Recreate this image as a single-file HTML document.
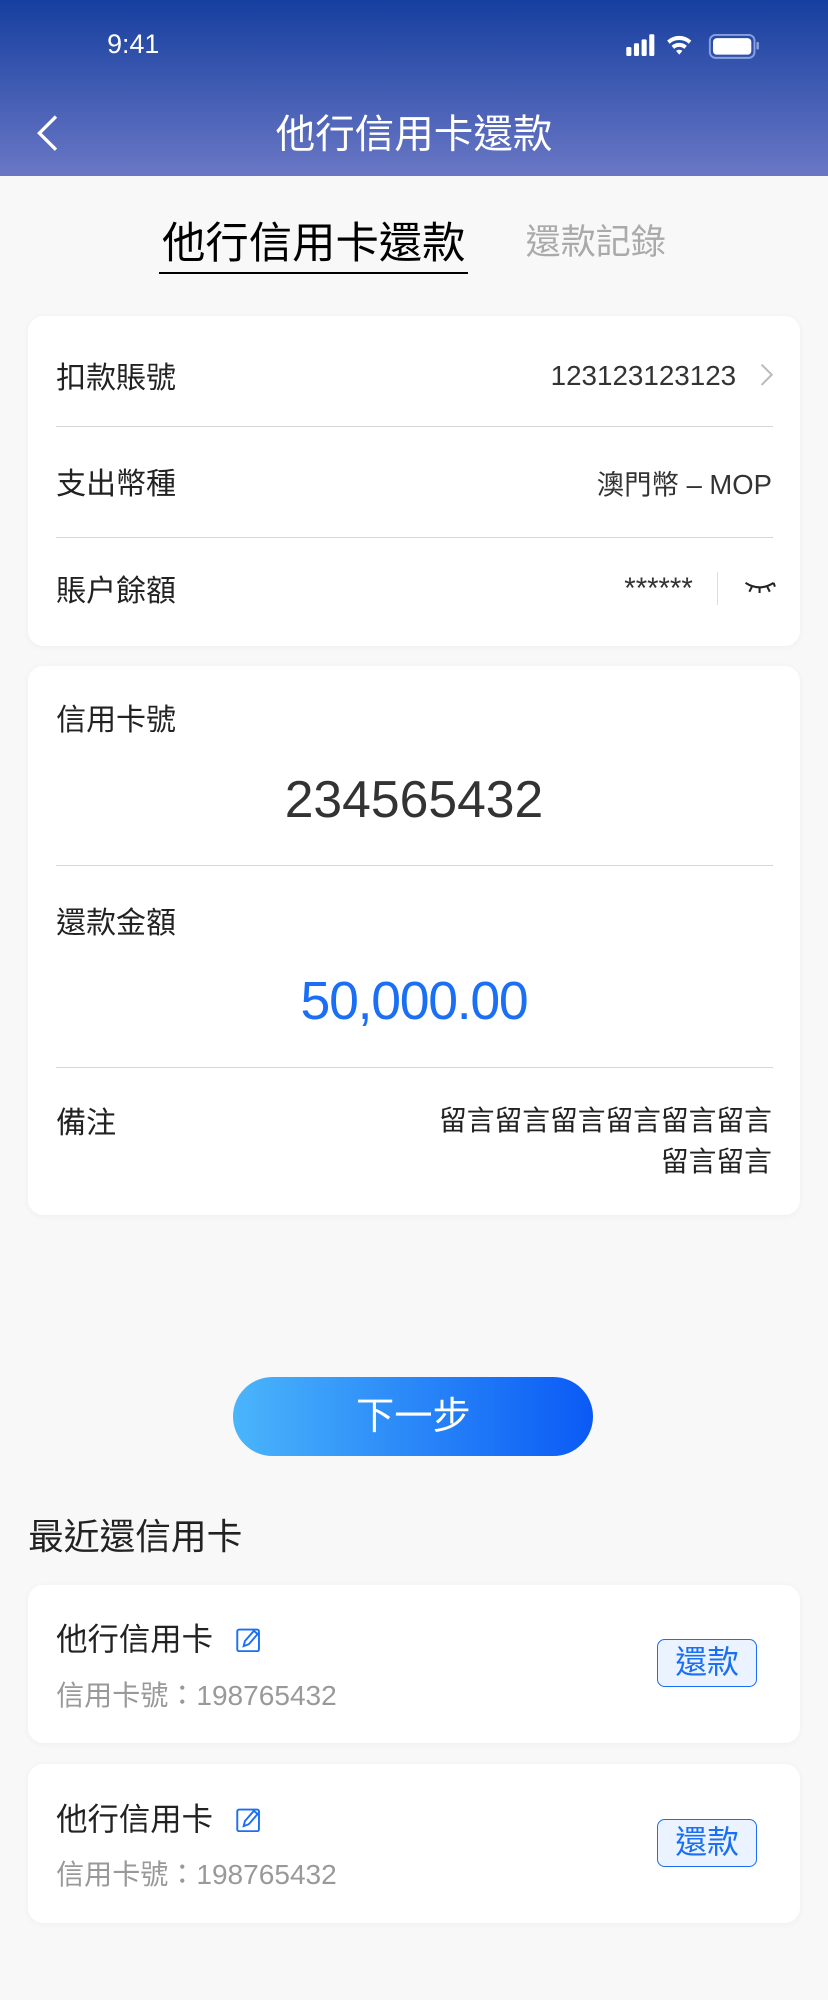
<!DOCTYPE html>
<html><head><meta charset="utf-8"><style>
html,body{margin:0;padding:0;background:#f8f8f8;}
body{width:828px;height:2000px;overflow:hidden;}
#w{zoom:1.27581;width:649px;height:1568px;position:relative;font-family:"Liberation Sans","Noto Sans CJK TC",sans-serif;color:#222;}
.a{position:absolute;white-space:nowrap;}
.hd{position:absolute;left:0;top:0;width:649px;height:138px;background:linear-gradient(#163f9f,#6a77c5);}
.card{position:absolute;left:22px;width:605px;background:#fff;border-radius:12px;box-shadow:0 1px 6px rgba(0,0,0,0.04);}
.ln{position:absolute;left:22px;width:562px;height:1px;background:#d6d6d6;}
.lab{font-size:23.5px;color:#222;}
.btn2{position:absolute;left:493px;width:77px;height:36px;border:1.5px solid #1a6ff5;border-radius:6px;background:#eaf3ff;color:#1a6ff5;font-size:25px;text-align:center;line-height:36px;}
</style></head><body><div id="w">
<div class="hd"></div>
<div class="a" style="left:84px;top:23px;font-size:21px;color:#fff;">9:41</div>
<svg class="a" style="left:490px;top:26px" width="106" height="22" viewBox="0 0 106 22">
<g fill="#fff"><rect x="1" y="11" width="4" height="7" rx="1"/><rect x="7" y="8" width="4" height="10" rx="1"/><rect x="13" y="5" width="4" height="13" rx="1"/><rect x="19" y="1" width="4" height="17" rx="1"/>
<path d="M33 6a14 14 0 0 1 19 0l-2 2.4a11 11 0 0 0-15 0z"/><path d="M36.5 10a9 9 0 0 1 12 0l-2 2.4a6 6 0 0 0-8 0z"/><path d="M40 14a4 4 0 0 1 5 0l-2.5 3z"/>
<rect x="69" y="4" width="30" height="13" rx="3"/></g>
<rect x="66.5" y="1.5" width="35" height="18" rx="4.5" fill="none" stroke="#8aa0dd" stroke-width="1.5"/><rect x="103" y="7" width="2" height="6" rx="1" fill="#8aa0dd"/>
</svg>
<svg class="a" style="left:26px;top:89px" width="22" height="30" viewBox="0 0 22 30"><path d="M18 2L5 15l13 13" fill="none" stroke="#fff" stroke-width="2.6"/></svg>
<div class="a" style="left:0;width:649px;text-align:center;top:81px;font-size:31px;color:#fff;">他行信用卡還款</div>
<div class="a" style="left:127px;top:164px;font-size:34px;color:#000;">他行信用卡還款</div>
<div class="a" style="left:125px;top:213px;width:242px;height:2px;background:#000;"></div>
<div class="a" style="left:412px;top:168px;font-size:27.5px;color:#aaa;">還款記錄</div>

<div class="card" style="top:248px;height:258px;">
<div class="a lab" style="left:22px;top:29px;">扣款賬號</div>
<div class="a" style="right:50px;top:34px;font-size:21.8px;color:#333;">123123123123</div>
<svg class="a" style="right:20px;top:36px" width="12" height="20" viewBox="0 0 12 20"><path d="M2 2l8 8-8 8" fill="none" stroke="#bbb" stroke-width="1.6"/></svg>
<div class="ln" style="top:86px;"></div>
<div class="a lab" style="left:22px;top:112px;">支出幣種</div>
<div class="a" style="right:22px;top:114px;font-size:21.5px;color:#333;">澳門幣 – MOP</div>
<div class="ln" style="top:173px;"></div>
<div class="a lab" style="left:22px;top:196px;">賬户餘額</div>
<div class="a" style="right:84px;top:200px;font-size:23px;color:#333;">******</div>
<div class="a" style="left:540px;top:200px;width:1px;height:26px;background:#ddd;"></div>
<svg class="a" style="left:560px;top:206px" width="26" height="14" viewBox="0 0 26 14"><g fill="none" stroke="#222" stroke-width="1.6"><path d="M2 3q11 7 22 0"/><path d="M7 6l-2 4M13 7v4M19 6l2 4M24 3l1 3"/></g></svg>
</div>

<div class="card" style="top:522px;height:430px;">
<div class="a lab" style="left:22px;top:23px;">信用卡號</div>
<div class="a" style="left:0;width:605px;text-align:center;top:81px;font-size:40.5px;color:#333;">234565432</div>
<div class="ln" style="top:156px;"></div>
<div class="a lab" style="left:22px;top:182px;">還款金額</div>
<div class="a" style="left:0;width:605px;text-align:center;top:238px;font-size:42px;color:#1a6ff5;letter-spacing:-1px;">50,000.00</div>
<div class="ln" style="top:314px;"></div>
<div class="a lab" style="left:22px;top:339px;">備注</div>
<div class="a" style="right:22px;top:341px;font-size:21.75px;color:#222;text-align:right;line-height:32px;">留言留言留言留言留言留言<br>留言留言</div>
</div>

<div class="a" style="left:183px;top:1079px;width:282px;height:62px;border-radius:31px;background:linear-gradient(90deg,#4ab5fb,#0a5af5);color:#fff;font-size:30px;text-align:center;line-height:62px;">下一步</div>
<div class="a" style="left:22px;top:1183px;font-size:28px;color:#222;">最近還信用卡</div>

<div class="card" style="top:1242px;height:124px;">
<div class="a" style="left:22px;top:24px;font-size:24.6px;color:#222;">他行信用卡</div>
<svg class="a" style="left:163px;top:33px" width="20" height="20" viewBox="0 0 20 20"><g fill="none" stroke="#1a6ff5" stroke-width="1.5"><rect x="1" y="2" width="17" height="17" rx="1.5"/><path d="M6 15l1-4 7-8 3 2.5-7 8z"/></g></svg>
<div class="a" style="left:22px;top:69px;font-size:22px;color:#999;">信用卡號：198765432</div>
<div class="btn2" style="top:43px;">還款</div>
</div>
<div class="card" style="top:1383px;height:124px;">
<div class="a" style="left:22px;top:24px;font-size:24.6px;color:#222;">他行信用卡</div>
<svg class="a" style="left:163px;top:33px" width="20" height="20" viewBox="0 0 20 20"><g fill="none" stroke="#1a6ff5" stroke-width="1.5"><rect x="1" y="2" width="17" height="17" rx="1.5"/><path d="M6 15l1-4 7-8 3 2.5-7 8z"/></g></svg>
<div class="a" style="left:22px;top:69px;font-size:22px;color:#999;">信用卡號：198765432</div>
<div class="btn2" style="top:43px;">還款</div>
</div>
</div></body></html>
